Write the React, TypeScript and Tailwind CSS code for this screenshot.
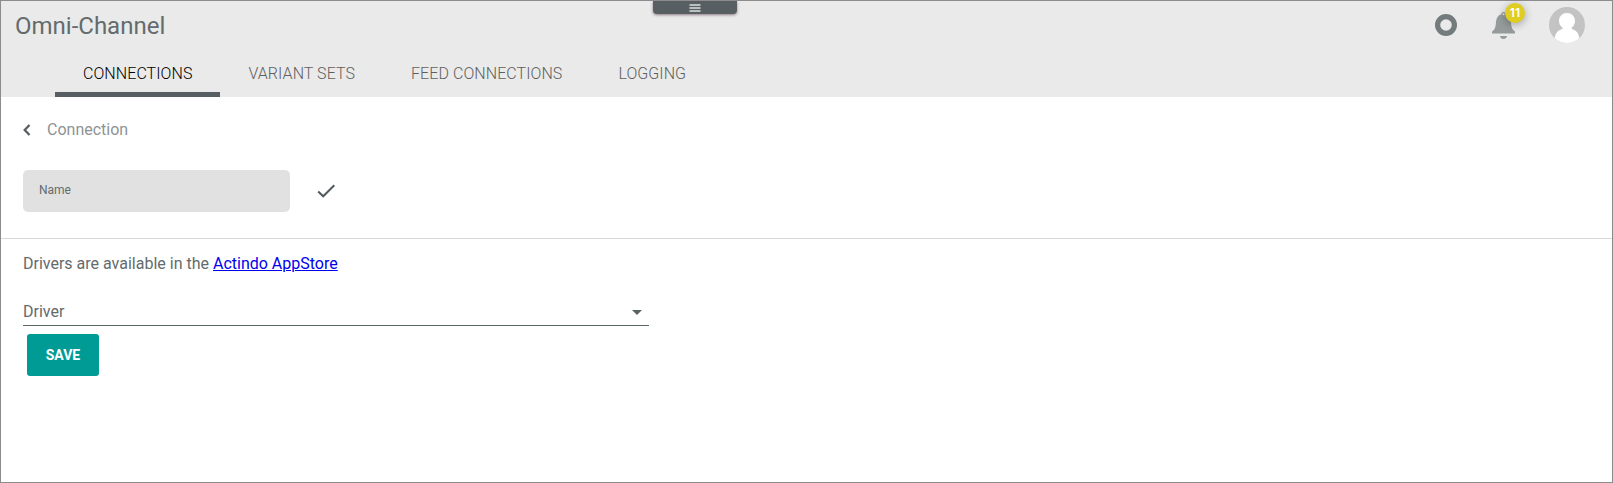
const tabs = [
  { label: "CONNECTIONS", active: true },
  { label: "VARIANT SETS", active: false },
  { label: "FEED CONNECTIONS", active: false },
  { label: "LOGGING", active: false },
];

function MenuHandle() {
  return (
    <div className="absolute left-[652px] top-0 flex h-[13px] w-[84px] justify-center rounded-b bg-[#575f62] pt-[3px] shadow-[0_1px_3px_rgba(60,30,50,0.55)]">
      <svg width="12" height="9" viewBox="0 0 12 9" fill="#dcdfdf">
        <path d="M.5.2h11v1.6H.5zM.5 3.2h11v1.6H.5zM.5 6.2h11v1.6H.5z" />
      </svg>
    </div>
  );
}

function Notifications() {
  return (
    <div className="relative ml-[35px] mt-[10px] h-7 w-6">
      <svg width="24" height="28" viewBox="0 0 24 28" fill="#959b9b">
        <path
          fillRule="evenodd"
          d="M11.5 1C10.1 1 9.3 1.9 9.3 3.3C6 4.3 4.2 7.2 4 11C3.7 15.5 3.2 18 1.2 19.4C.5 19.9 0 20.5 0 21.3V22.600H23V21.3C23 20.5 22.5 19.9 21.8 19.4C19.8 18 19.3 15.5 19 11C18.8 7.2 17 4.3 13.7 3.3C13.7 1.9 12.9 1 11.5 1ZM11.5 2.3A1 1 0 0 1 11.5 4.3A1 1 0 0 1 11.5 2.3Z"
        />
        <path d="M8 25h7c-.2 1.8-1.6 3-3.500 3S8.200 26.800 8 25z" />
      </svg>
      <span className="absolute -top-[8px] left-[13px] flex size-5 items-center justify-center rounded-full bg-[#dfcd21] font-['Inter',sans-serif] text-[12px] font-semibold leading-none tracking-[0.3px] text-white shadow-[0_2px_8px_rgba(0,0,0,0.32)]">
        11
      </span>
    </div>
  );
}

function Avatar() {
  return (
    <svg className="ml-[33px] mt-[6px]" width="36" height="36" viewBox="0 0 36 36">
      <circle cx="18" cy="18" r="18" fill="#c3c3c3" />
      <path
        fill="#fff"
        d="M18 6C22.500 6 26 9.500 26 14C26 17 24.500 19.200 22.700 20.600V22C27 23 29.700 26 30.300 31.200C27 34.300 22.800 36 18 36S9 34.300 5.700 31.200C6.300 26 9 23 13.500 22V20.600C11.500 19.200 10 17 10 14C10 9.500 13.500 6 18 6Z"
      />
    </svg>
  );
}

export default function App() {
  return (
    <div className="relative h-[483px] w-[1613px] overflow-hidden border border-[#8c8c8c] bg-white font-[Roboto,sans-serif] text-base text-[#636b6c]">
      <MenuHandle />
      <header className="flex h-24 flex-col bg-[#eaeaea]">
        <div className="flex h-12 items-start justify-between pr-[27px]">
          <h1 className="pl-[14px] pt-[9px] text-2xl leading-8">Omni-Channel</h1>
          <div className="flex">
            <svg className="mt-[13px]" width="22" height="22" viewBox="0 0 22 22">
              <circle cx="11" cy="11" r="8.400" fill="none" stroke="#747b7d" strokeWidth="5.200" />
            </svg>
            <Notifications />
            <Avatar />
          </div>
        </div>
        <nav className="flex h-12 pl-[54px] tracking-[0.065px]">
          {tabs.map((tab) => (
            <a
              key={tab.label}
              className={
                tab.active
                  ? "flex border-b-[5px] border-[#575f62] px-7 pt-[13px] font-light text-black"
                  : "flex border-b-[5px] border-transparent px-7 pt-[13px] font-light text-[#5f5f5f]"
              }
            >
              {tab.label}
            </a>
          ))}
        </nav>
      </header>
      <main>
        <section className="h-[142px] border-b border-[#d8d8d8] pl-[22px]">
          <div className="flex h-[73px] items-start pt-[21px]">
            <svg className="mt-[6px]" width="8" height="12" viewBox="0 0 8 12">
              <path d="M6.500 1L1.700 6L6.500 11" fill="none" stroke="#575f62" strokeWidth="2.300" />
            </svg>
            <span className="ml-4 text-[#8d9394]">Connection</span>
          </div>
          <div className="flex items-center">
            <div className="flex h-[42px] w-[267px] items-center rounded-[5px] bg-[#e1e1e1] pb-[3px] pl-4 text-xs">
              Name
            </div>
            <svg className="ml-[27px]" width="19" height="14" viewBox="0 0 19 14">
              <path d="M1.200 7.500L6.200 12.300L17.300 1.200" fill="none" stroke="#50595b" strokeWidth="2" />
            </svg>
          </div>
        </section>
        <section className="pl-[22px] pt-[13px]">
          <p>
            Drivers are available in the{" "}
            <a className="text-[#0000ee] underline">Actindo AppStore</a>
          </p>
          <div className="mt-[23px] flex h-[27px] w-[626px] items-start justify-between border-b border-[#5b6a69] pr-[7px]">
            <span className="mt-px">Driver</span>
            <svg className="mt-[11px]" width="10" height="5" viewBox="0 0 10 5" fill="#5b6365">
              <path d="M0 0h10L5 5z" />
            </svg>
          </div>
          <button className="ml-1 mt-2 flex h-[42px] w-[72px] items-center justify-center rounded-[3px] bg-[#009b95] pb-px text-sm font-bold text-white">
            SAVE
          </button>
        </section>
      </main>
    </div>
  );
}
